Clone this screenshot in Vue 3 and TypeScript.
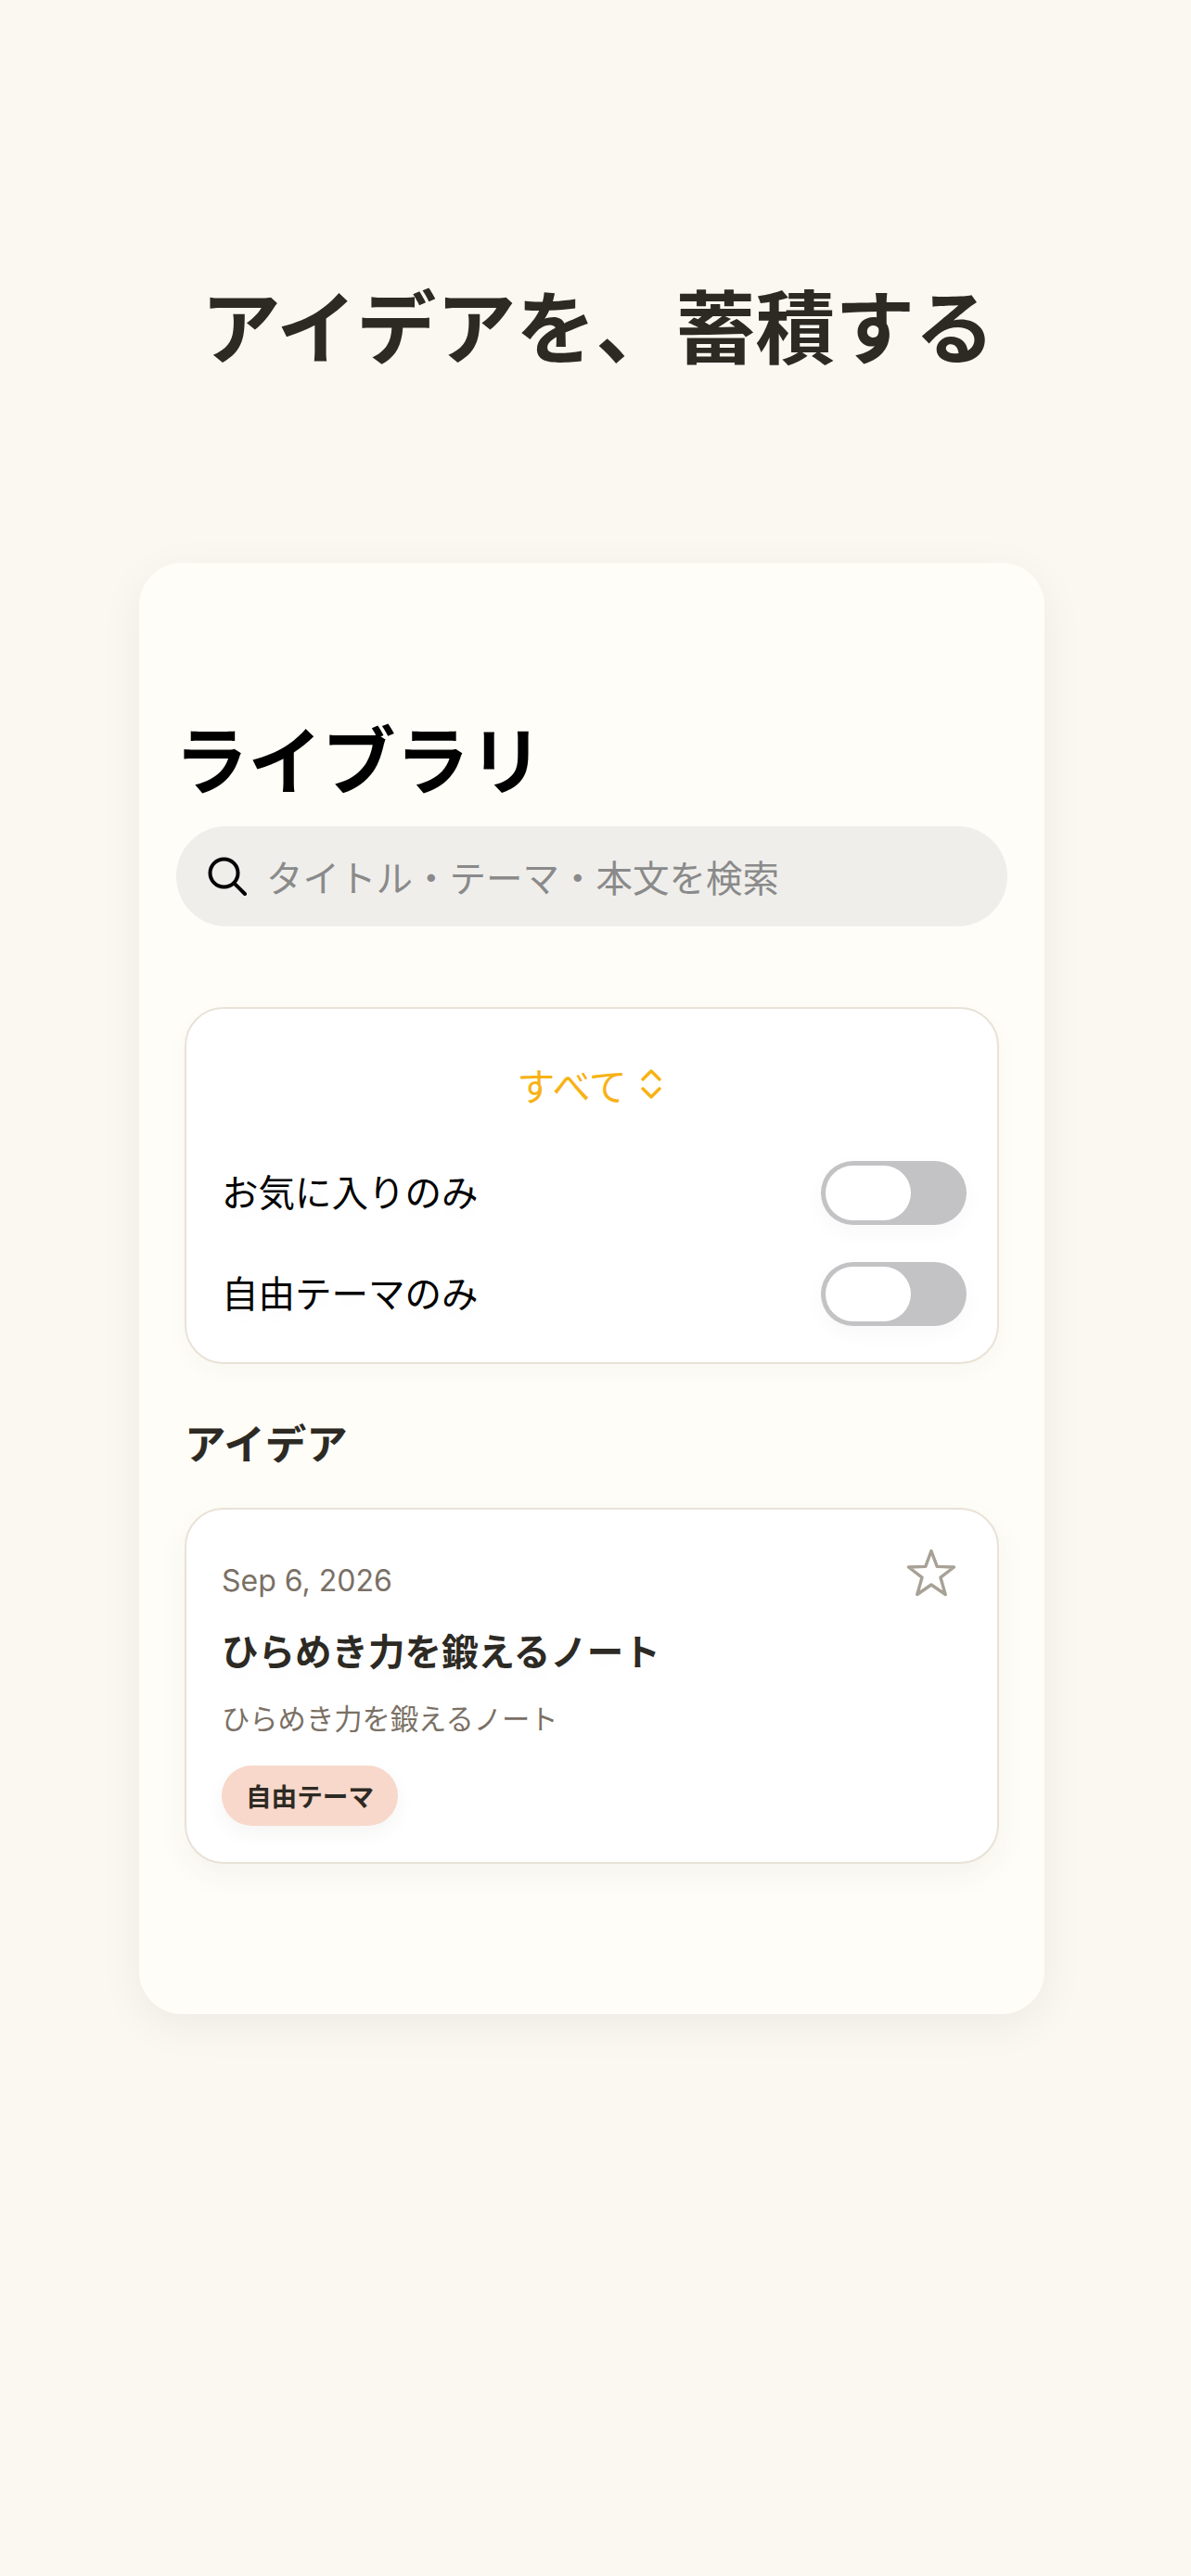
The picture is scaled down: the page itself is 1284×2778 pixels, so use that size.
<script setup lang="ts">
import { ref } from "vue";

const filters = ref([
  { label: "お気に入りのみ", on: false },
  { label: "自由テーマのみ", on: false },
]);

const ideas = ref([
  {
    date: "Sep 6, 2026",
    title: "ひらめき力を鍛えるノート",
    body: "ひらめき力を鍛えるノート",
    tag: "自由テーマ",
  },
]);
</script>

<template>
  <div class="page">
    <h1 class="headline">アイデアを、蓄積する</h1>

    <div class="phone">
      <h2 class="title">ライブラリ</h2>

      <div class="search">
        <svg class="search-icon" viewBox="0 0 42 42" fill="none" stroke="#000" stroke-width="4" stroke-linecap="round">
          <circle cx="17.5" cy="17.5" r="15" />
          <path d="M28.5 28.5 L40 40" />
        </svg>
        <span class="placeholder">タイトル・テーマ・本文を検索</span>
      </div>

      <section class="filter-card">
        <div class="picker">
          <span>すべて</span>
          <svg class="chevrons" viewBox="0 0 22 32" fill="none" stroke="#F7B215" stroke-width="3.4" stroke-linecap="round" stroke-linejoin="round">
            <path d="M2 11 L11 2 L20 11" />
            <path d="M2 21 L11 30 L20 21" />
          </svg>
        </div>
        <div v-for="item in filters" :key="item.label" class="filter-row">
          <span class="filter-label">{{ item.label }}</span>
          <div class="toggle">
            <div class="knob"></div>
          </div>
        </div>
      </section>

      <h3 class="section-title">アイデア</h3>

      <article v-for="idea in ideas" :key="idea.title" class="idea-card">
        <div class="idea-head">
          <span class="idea-date">{{ idea.date }}</span>
          <svg class="star" viewBox="0 0 54 52" fill="none" stroke="#A8A196" stroke-width="3.4" stroke-linejoin="round">
            <path d="M27 2.5 L33.2 19.4 L51.5 20 L37 31.2 L42.2 49.5 L27 39 L11.8 49.5 L17 31.2 L2.5 20 L20.8 19.4 Z" />
          </svg>
        </div>
        <div class="idea-title">{{ idea.title }}</div>
        <div class="idea-body">{{ idea.body }}</div>
        <span class="idea-tag">{{ idea.tag }}</span>
      </article>
    </div>
  </div>
</template>

<style>
html,
body {
  margin: 0;
  background: #fbf8f1;
}
</style>

<style scoped>
.page {
  box-sizing: border-box;
  width: 1284px;
  height: 2778px;
  padding-top: 289px;
  background: #fbf8f1;
  font-family: "Noto Sans CJK JP", "Noto Sans", sans-serif;
  overflow: hidden;
}

.headline {
  margin: 0 0 198px;
  padding-left: 5px;
  font-size: 86px;
  line-height: 120px;
  font-weight: 700;
  text-align: center;
  color: #2d2a24;
  white-space: nowrap;
}

.phone {
  box-sizing: border-box;
  width: 976px;
  height: 1565px;
  margin-left: 150px;
  padding: 164px 40px 0 40px;
  background: #fefdf8;
  border-radius: 46px;
  box-shadow: 0 12px 48px rgba(0, 0, 0, 0.06);
}

.title {
  margin: 0 0 30px -2px;
  font-size: 79.5px;
  line-height: 90px;
  font-weight: 700;
  color: #000;
}

.search {
  display: flex;
  align-items: center;
  gap: 21px;
  height: 108px;
  padding-left: 34px;
  background: #efeeeb;
  border-radius: 54px;
}

.search-icon {
  width: 42px;
  height: 42px;
  flex-shrink: 0;
}

.placeholder {
  font-size: 39.5px;
  line-height: 50px;
  color: #8a8a8a;
}

.filter-card {
  box-sizing: border-box;
  height: 385px;
  margin: 87px 9px 0;
  padding: 56px 33px 0 38px;
  background: #fff;
  border: 2px solid #e9e2d6;
  border-radius: 42px;
  box-shadow: 0 8px 24px rgba(60, 50, 30, 0.03);
}

.picker {
  display: flex;
  align-items: center;
  justify-content: center;
  gap: 15px;
  height: 50px;
  margin-bottom: 58px;
  padding-right: 11px;
  font-size: 41px;
  line-height: 50px;
  color: #f7b215;
}

.chevrons {
  width: 22px;
  height: 32px;
}

.filter-row {
  display: flex;
  align-items: center;
  justify-content: space-between;
  height: 69px;
}

.filter-row + .filter-row {
  margin-top: 40px;
}

.filter-label {
  padding-bottom: 5px;
  font-size: 39.5px;
  line-height: 50px;
  color: #000;
  text-shadow: 0 6px 20px rgba(0, 0, 0, 0.04);
}

.toggle {
  box-sizing: border-box;
  width: 157px;
  height: 69px;
  padding: 5px;
  background: #c3c3c5;
  border-radius: 35px;
  box-shadow: 0 8px 24px rgba(0, 0, 0, 0.03);
}

.knob {
  width: 92px;
  height: 59px;
  background: #fff;
  border-radius: 30px;
}

.section-title {
  margin: 54px 0 41px 9px;
  font-size: 44.5px;
  line-height: 60px;
  font-weight: 700;
  color: #2d2a24;
}

.idea-card {
  box-sizing: border-box;
  height: 384px;
  margin: 0 9px;
  padding: 42px 44px 0 38px;
  background: #fff;
  border: 2px solid #e9e2d6;
  border-radius: 42px;
  box-shadow: 0 12px 32px rgba(60, 50, 30, 0.05);
}

.idea-head {
  display: flex;
  align-items: flex-start;
  justify-content: space-between;
  height: 58px;
}

.idea-date {
  margin-top: 13px;
  font-family: Inter, "Liberation Sans", sans-serif;
  font-size: 32px;
  line-height: 44px;
  color: #7a7065;
}

.star {
  width: 54px;
  height: 52px;
}

.idea-title {
  margin-top: 21px;
  font-size: 39.5px;
  line-height: 60px;
  font-weight: 700;
  color: #2d2a24;
  text-shadow: 0 6px 20px rgba(0, 0, 0, 0.03);
}

.idea-body {
  margin-top: 21px;
  font-size: 30.3px;
  line-height: 44px;
  color: #7a7065;
}

.idea-tag {
  display: inline-block;
  height: 65px;
  margin-top: 30px;
  padding: 0 26px;
  font-size: 27.6px;
  line-height: 65px;
  font-weight: 700;
  color: #2d2a24;
  background: #f8d8ca;
  border-radius: 33px;
  box-shadow: 0 8px 20px rgba(60, 50, 30, 0.05);
}
</style>
